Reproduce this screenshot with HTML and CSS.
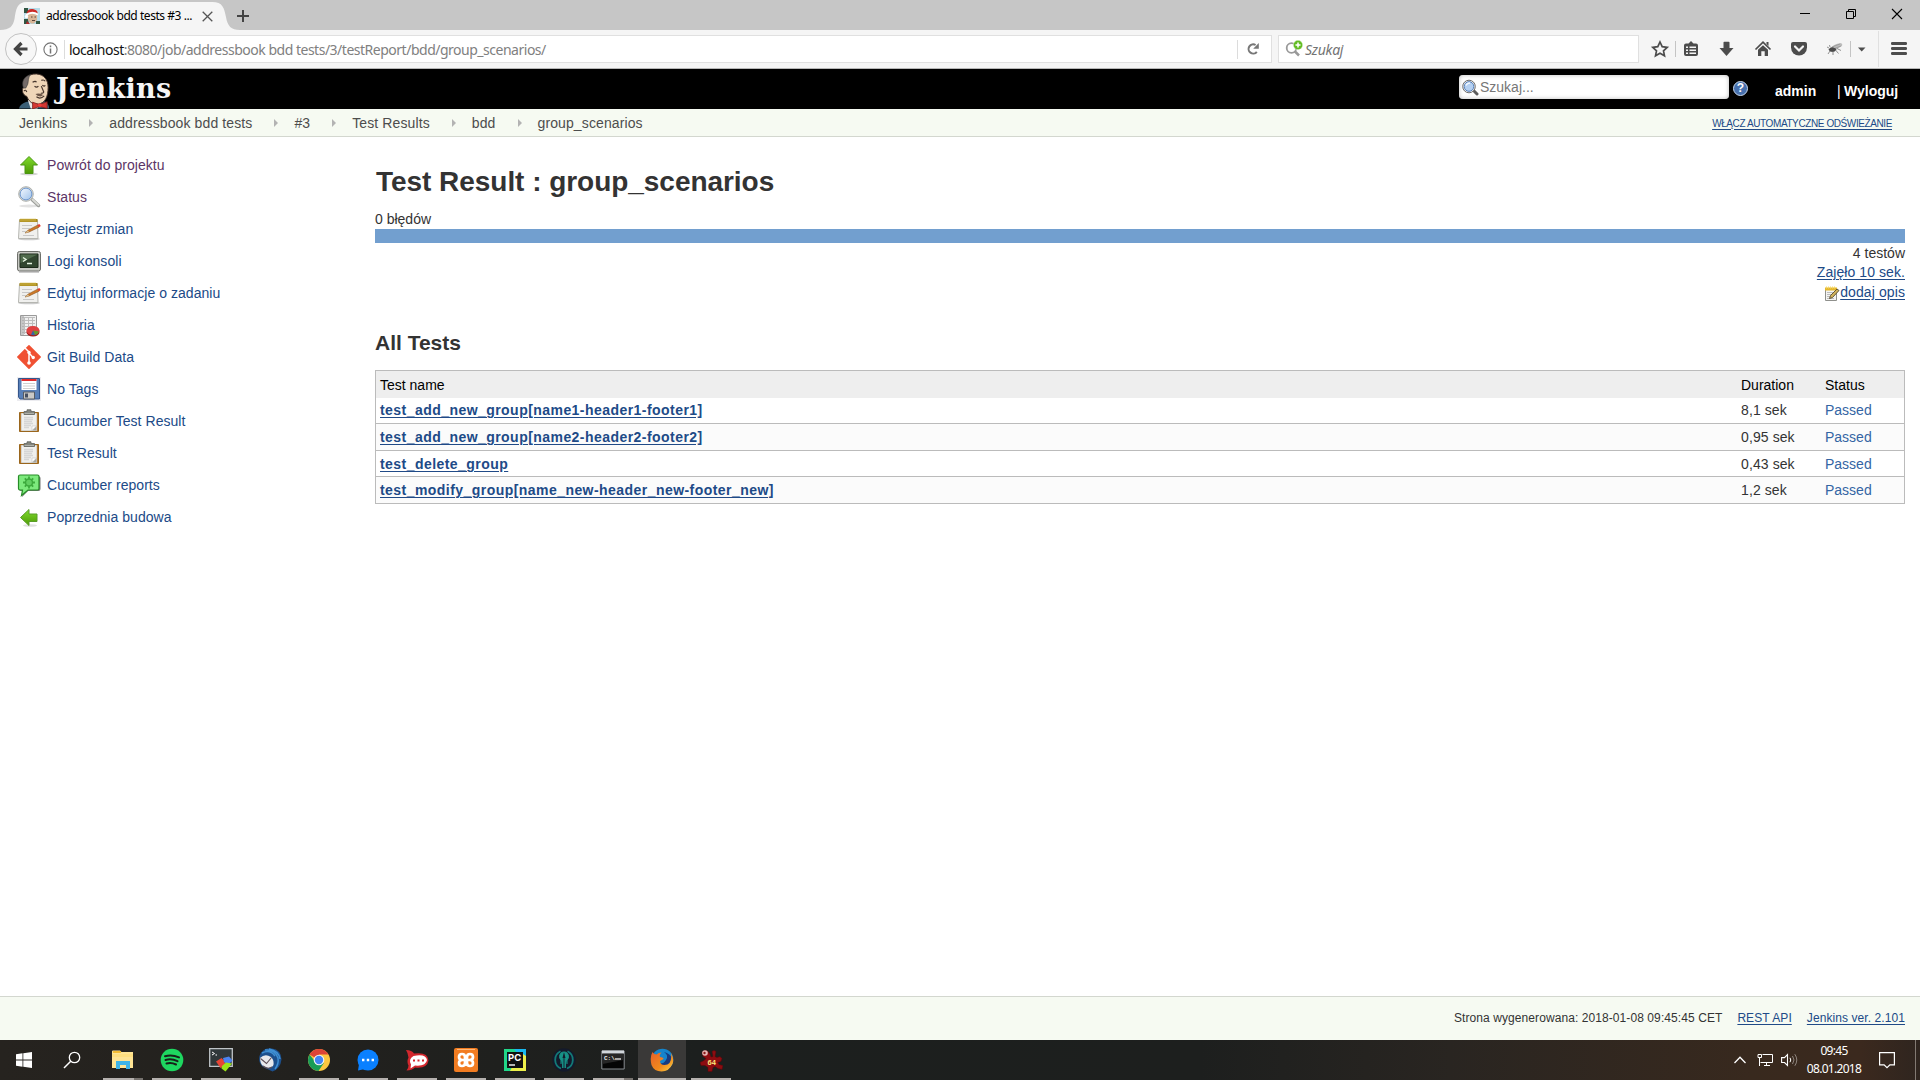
FILE: index.html
```html
<!DOCTYPE html>
<html lang="pl">
<head>
<meta charset="utf-8">
<title>addressbook bdd tests #3 - Jenkins</title>
<link rel="stylesheet" href="styles.css">
</head>
<body>
<svg width="0" height="0" class="defs">
  <defs>
    <linearGradient id="gr" x2="0" y2="1"><stop stop-color="#7fdc2c"/><stop offset="1" stop-color="#4e9a06"/></linearGradient>
    <linearGradient id="lens" x2="1" y2="1"><stop stop-color="#f4f9ff"/><stop offset="1" stop-color="#9fc2ea"/></linearGradient>
    <linearGradient id="fox" x1="0" y1="0" x2="1" y2="1"><stop stop-color="#e6602a"/><stop offset=".6" stop-color="#f08a1c"/><stop offset="1" stop-color="#fbd54a"/></linearGradient>
    <symbol id="notepad" viewBox="0 0 24 24">
      <ellipse cx="12" cy="22" rx="11" ry="1.300" fill="#ccc"/>
      <path d="M2.500 3h18l.5 18.500H1.500z" fill="#f0f0ee" stroke="#b5b6b1"/>
      <path d="M2.500 2h18v3h-18z" fill="#a88a1c"/><path d="M4 1.500v3M6 1.500v3M8 1.500v3M10 1.500v3M12 1.500v3M14 1.500v3M16 1.500v3M18 1.500v3" stroke="#d3b94a"/>
      <path d="M5 8.500h10M5 11.500h8M5 14.500h5M6 18.500h11" stroke="#c8c8c8"/>
      <path d="M8 16l3-2.800L20.500 8.200l1.500 2L12 15z" fill="#cf7a29" stroke="#895018" stroke-width=".6"/><path d="M20.300 8l2-1 1.500 2-1.800 1.200z" fill="#e33b2d"/><path d="M8 16l3-2.800 1 1.800z" fill="#d9c59c"/>
    </symbol>
    <symbol id="clipboard" viewBox="0 0 24 24">
      <path d="M2.500 3.500h19v19h-19z" fill="#b97c30" stroke="#9a661d"/>
      <path d="M4.500 4.500h15v17h-15z" fill="#f0f0ee" stroke="#d7d7d3"/>
      <path d="M7 8.500h9M7 10.500h9M7 12.500h8M7 14.500h9M7 16.500h7M7 18.500h5" stroke="#d6d6d6" stroke-width="1.500"/>
      <path d="M15 21.500l4.500-4.500v4.500z" fill="#a6a6a0"/><path d="M15 21.500v-4.500h4.500z" fill="#fff" stroke="#bbb" stroke-width=".5"/>
      <path d="M7 5.500v-3h3V.8h4v1.700h3.500v3z" fill="#858780" stroke="#60625d" stroke-width=".8"/><path d="M7.500 4.500h9.500" stroke="#aeb0aa"/>
    </symbol>
    <symbol id="lensicon" viewBox="0 0 24 24">
      <ellipse cx="12" cy="21" rx="10" ry="1.500" fill="#e2e2e2"/>
      <path d="M15 14.500l6.500 6" stroke="#9c9e9a" stroke-width="3.500" stroke-linecap="round"/><path d="M15.500 14.500l6 5.500" stroke="#d9dad6" stroke-width="1.800" stroke-linecap="round"/>
      <circle cx="9" cy="9" r="7.300" fill="#d8dad5" stroke="#b0b2ae"/><circle cx="9" cy="9" r="5.900" fill="url(#lens)" stroke="#6d97cf"/>
    </symbol>
  </defs>
</svg>

<div class="tabstrip">
  <div class="tab">
    <svg class="tab-shape" width="240" height="28" viewBox="0 0 240 28"><path d="M0 28C10 28 13 24 14.500 17C16 7 17 0 27 0H212C223 0 224 6 226 15C227.500 24 231 28 240 28z" fill="#f5f5f5"/></svg>
    <svg width="16" height="16" viewBox="0 0 16 16"><path d="M0 0h16v16H0z" fill="#b6dbe8"/><path d="M0 0h4v5H0zM0 11h4l1 5H0zM12 13h4v3h-4z" fill="#315542"/><path d="M3.500 7C4 3 7 2 11 3l2 4v5l-3 3.500H7L4 12z" fill="#d9b596"/><path d="M2.500 6C3 1 8-.5 13 3l1 3C10 3.800 6 4 2.500 6z" fill="#cc2b27"/><path d="M2 7C6 4 10 4 14 6.500" stroke="#fff" stroke-width="2" fill="none"/><circle cx="2.500" cy="8.500" r="1.700" fill="#fff"/><path d="M7 9h1.500M10.500 9H12M8 12.500h3" stroke="#594239"/><path d="M3 13l3 3H2z" fill="#b4282d"/></svg>
    <span class="tab-title">addressbook bdd tests #3 ...</span>
    <svg class="tab-close" width="11" height="11" viewBox="0 0 11 11"><path d="M.7.700l9.600 9.600M10.300.7L.7 10.300" stroke="#555" stroke-width="1.300"/></svg>
  </div>
  <svg class="newtab" width="12" height="12" viewBox="0 0 12 12"><path d="M6 0v12M0 6h12" stroke="#444" stroke-width="2"/></svg>
  <div class="winctl">
    <svg width="46" height="28" viewBox="0 0 46 28"><path d="M18 13.500h10" stroke="#000"/></svg>
    <svg width="46" height="28" viewBox="0 0 46 28"><path d="M18.500 11.500h7v7h-7zM20.500 11.500v-2h7v7h-2" fill="none" stroke="#000"/></svg>
    <svg width="46" height="28" viewBox="0 0 46 28"><path d="M18 9l10 10M28 9L18 19" stroke="#000" stroke-width="1.100"/></svg>
  </div>
</div>

<div class="toolbar">
  <div class="back"><svg width="16" height="16" viewBox="0 0 16 16"><path d="M14.500 8H4M8.500 2L2.500 8l6 6" fill="none" stroke="#444" stroke-width="3.200"/></svg></div>
  <div class="urlbar">
    <svg class="info" width="15" height="15" viewBox="0 0 15 15"><circle cx="7.500" cy="7.500" r="6.600" fill="none" stroke="#737373" stroke-width="1.100"/><path d="M7.500 6.500v5M7.500 3.500v1.700" stroke="#737373" stroke-width="1.500"/></svg>
    <span class="vline"></span>
    <span class="url"><b>localhost</b>:8080/job/addressbook bdd tests/3/testReport/bdd/group_scenarios/</span>
    <span class="vline"></span>
    <svg class="reload" width="12" height="12" viewBox="0 0 12 12"><path d="M9.800 8.800A4.600 4.600 0 1 1 8.600 2" fill="none" stroke="#777" stroke-width="2"/><path d="M11.800 0v5.700H6.200z" fill="#777"/></svg>
  </div>
  <div class="searchbar">
    <svg width="18" height="18" viewBox="0 0 18 18"><circle cx="6.500" cy="8" r="4.800" fill="none" stroke="#999" stroke-width="1.800"/><path d="M9.500 11l4.500 4.500" stroke="#999" stroke-width="2.500"/><circle cx="13" cy="5" r="4.700" fill="#62bc22" stroke="#fff" stroke-width=".4"/><path d="M13 2.500v5M10.500 5h5" stroke="#fff" stroke-width="1.500"/></svg>
    <i>Szukaj</i>
  </div>
  <div class="tools">
    <svg width="30" height="20" viewBox="0 0 30 20"><path d="M15 3l2.200 4.700 5 .6-3.700 3.500 1 5L15 14.300l-4.500 2.500 1-5L7.800 8.300l5-.6z" fill="none" stroke="#4c4c4c" stroke-width="1.700"/></svg>
    <span class="vline"></span>
    <svg width="30" height="20" viewBox="0 0 30 20"><path d="M10 4.500h2.500L15 2l2.500 2.500H20q2 0 2 2V15q0 2-2 2H10q-2 0-2-2V6.500q0-2 2-2z" fill="#4c4c4c"/><path d="M10 8.200h2M13.500 8.200h6.500M10 11.200h2M13.500 11.200h6.500M10 14.200h2M13.500 14.200h6.500" stroke="#f5f5f5" stroke-width="1.600"/></svg>
    <svg width="36" height="20" viewBox="0 0 36 20"><path d="M15 3.500q0-.8.800-.8h4.400q.8 0 .8.800V9h4L18 17 11 9h4z" transform="translate(-.5)" fill="#4c4c4c"/></svg>
    <svg width="36" height="20" viewBox="0 0 36 20"><path d="M10.500 10.500L18 3.200l7.500 7.300" fill="none" stroke="#4c4c4c" stroke-width="1.700"/><path d="M21.500 3h2v4l-2-2zM13 10.800l5-4.600 5 4.600V17h-3.300v-4.800h-3.400V17H13z" fill="#4c4c4c"/></svg>
    <svg width="36" height="20" viewBox="0 0 36 20"><path d="M12 3h12q2 0 2 2v3.500a8 8 0 0 1-16 0V5q0-2 2-2z" fill="#4c4c4c"/><path d="M14 7.500l4 4 4-4" fill="none" stroke="#f5f5f5" stroke-width="2.200" stroke-linecap="round"/></svg>
    <svg width="36" height="20" viewBox="0 0 36 20"><path d="M13 10q3-5 11-6 2 1 1 3-4 3-9 4z" fill="#bdbdbd"/><path d="M15 8l8-3M16 10l8-3" stroke="#888" stroke-width=".6"/><path d="M11.500 10.500q2-3 5-2l3 1.500q-1 3-4 3-3 0-4-2.500z" fill="#4a4a4a"/><path d="M12 9l-2-1M13 8l-.5-2M13 12l-2 3M16 12v4M18.500 11l3 3.500M20 9.500l4 2" fill="none" stroke="#777" stroke-width=".8"/></svg>
  </div>
  <span class="vline"></span>
  <svg class="caret" width="8" height="5" viewBox="0 0 8 5"><path d="M0 .5h7.500L3.700 4.500z" fill="#4c4c4c"/></svg>
  <span class="vline long"></span>
  <svg class="menu" width="16" height="14" viewBox="0 0 16 14"><path d="M1.300 1.500h13.400M1.300 6.500h13.400M1.300 11.500h13.400" stroke="#4c4c4c" stroke-width="2.800" stroke-linecap="round"/></svg>
</div>

<header class="jheader">
  <svg class="butler" width="34" height="36" viewBox="0 0 34 36"><path d="M0 36q1-5 8-7l17-1q6 2 6 8z" fill="#3b5f76"/><path d="M9 27l13 2-3 7h-7z" fill="#e9e9e9"/><path d="M5 14C4 6 9 0 18 .5c8 .5 12 6 12 14 0 9-3 16-10 17-6 1-10-3-12-8-4-1-6-7-3-9.500z" fill="#efd6b8" stroke="#46352c"/><path d="M4.500 15C2 7 6 3 12 1 9 4 10 8 9 11l-2 4z" fill="#746b68" stroke="#333" stroke-width=".6"/><path d="M5 18q2-2 3 1M14 9q3-2 4 0M23 7q3-1 4 1M16 13q2 2 4 0M24 12q2 2 3 0M23 13l2.500 6q-1 2-3 1M18 24q4 3 8-1" fill="none" stroke="#46352c" stroke-width="1.200"/><path d="M17 21q4-1 8 1l-2 1.500q-4 .5-6-2.500z" fill="#6e5748"/><path d="M14 29.500l7 2.500 8-3v7l-8-2-7 2.500z" fill="#d33833" stroke="#7c1b18" stroke-width=".8"/><circle cx="21.500" cy="32.500" r="2" fill="#ef3d3a"/></svg>
  <span class="logo">Jenkins</span>
  <div class="jsearch"><svg width="17" height="17" viewBox="0 0 17 17"><path d="M11 11l4 4" stroke="#5c5c5c" stroke-width="3" stroke-linecap="round"/><circle cx="7" cy="7.500" r="6.300" fill="#eee" stroke="#6f6f6f"/><circle cx="7" cy="7.500" r="4.800" fill="#b4d0f2" stroke="#5580bc"/><path d="M4 6.500q1-2.500 4-2.500" stroke="#f0f7ff" fill="none" stroke-width="1.500"/></svg><span>Szukaj...</span></div>
  <div class="help">?</div>
  <b class="admin">admin</b>
  <span class="bar">|</span><b class="logout">Wyloguj</b>
</header>

<nav class="crumbs">
  <span>Jenkins</span><i></i><span>addressbook bdd tests</span><i></i><span>#3</span><i></i><span>Test Results</span><i></i><span>bdd</span><i></i><span>group_scenarios</span>
  <a class="autorefresh">WŁĄCZ AUTOMATYCZNE ODŚWIEŻANIE</a>
</nav>

<div class="page">
  <aside class="side">
    <a class="visited"><svg width="24" height="24" viewBox="0 0 24 24"><ellipse cx="12" cy="21" rx="9" ry="1.500" fill="#d5d5d5"/><path d="M12 3.500l8.500 8.500H16v8.500H8V12H3.500z" fill="url(#gr)" stroke="#4b9613"/></svg>Powrót do projektu</a>
    <a class="visited"><svg width="24" height="24"><use href="#lensicon"/></svg>Status</a>
    <a><svg width="24" height="24"><use href="#notepad"/></svg>Rejestr zmian</a>
    <a><svg width="24" height="24" viewBox="0 0 24 24"><rect x=".5" y="2.500" width="23" height="19.500" rx="2" fill="#c8c9c4" stroke="#6d6f6a"/><path d="M3 5h18v13.500H3z" fill="#31452f" stroke="#1c2a1a"/><path d="M3.500 5.500h17L3.500 14z" fill="#506b4c"/><path d="M6 8.500l3 2-3 2M10 14.500h5" fill="none" stroke="#e8f6e3" stroke-width="1.400"/><path d="M2 23h20" stroke="#999"/></svg>Logi konsoli</a>
    <a><svg width="24" height="24"><use href="#notepad"/></svg>Edytuj informacje o zadaniu</a>
    <a><svg width="24" height="24" viewBox="0 0 24 24"><path d="M3.500 2.500h16v20h-16z" fill="#f0f0f0" stroke="#9a9a9a"/><path d="M5 4.500h13M5 7.500h13M5 10.500h13M5 13.500h13M5 16.500h8M5 19.500h6M7.500 4v17M11.500 4v17M15.500 4v12" stroke="#bdbdbd"/><path d="M4 3h3v19H4z" fill="#aaa" opacity=".6"/><ellipse cx="16" cy="19" rx="6.500" ry="4.500" fill="#a01c1c"/><ellipse cx="16" cy="17.500" rx="6.500" ry="4.500" fill="#e04141"/><path d="M16 17.500l6 1q-1 3-4 3.500z" fill="#639c2c"/><path d="M16 17.500l2 4.500q-2 .5-4-.2z" fill="#3465a4"/></svg>Historia</a>
    <a><svg width="24" height="24" viewBox="0 0 24 24"><path d="M12 .8L23.200 12 12 23.200.8 12z" fill="#f05133" stroke="#f05133" stroke-width="1.500" stroke-linejoin="round"/><path d="M8 3l4 4v11M12 8l4 4.500" fill="none" stroke="#fff" stroke-width="1.500"/><circle cx="12" cy="7.500" r="1.700" fill="#fff"/><circle cx="12" cy="18" r="1.800" fill="#fff"/><circle cx="16.200" cy="12.500" r="1.700" fill="#fff"/></svg>Git Build Data</a>
    <a><svg width="24" height="24" viewBox="0 0 24 24"><path d="M0 0h24v24H0z" fill="#ececf0"/><path d="M1.500 1.500h21v20.500H3l-1.500-2z" fill="#5880b8" stroke="#34568c"/><path d="M4.500 2h15v11h-15z" fill="#fff"/><path d="M4.500 2h15v2h-15z" fill="#e12b2b"/><path d="M6 6.500h12M6 9h12M6 11.500h12" stroke="#d0d0d0"/><path d="M6.500 15h11v7h-11z" fill="#c9c9c6" stroke="#565c64"/><path d="M8 16.500h3v4H8z" fill="#444f61"/></svg>No Tags</a>
    <a><svg width="24" height="24"><use href="#clipboard"/></svg>Cucumber Test Result</a>
    <a><svg width="24" height="24"><use href="#clipboard"/></svg>Test Result</a>
    <a><svg width="24" height="24" viewBox="0 0 24 24"><path d="M4 3.500h18q1.500 0 1.500 1.500v11q0 2-2 2H11l-6 6 1-6H4q-2 0-2-2V5z" fill="#777"/><path d="M3 2h17.500q1.500 0 1.500 1.500v12q0 1.500-1.500 1.500h-9.500L4.500 22.500l1-5.500H3q-1.500 0-1.500-1.500v-12Q1.500 2 3 2z" fill="#7dea7d" stroke="#278c27" stroke-width="1.200"/><path d="M12 3.500v12M6 9.500h12M7.800 5.300l8.400 8.400M16.200 5.300l-8.400 8.400" stroke="#3daa3d" stroke-width="1.800"/><circle cx="12" cy="9.500" r="3.500" fill="#62cf62" stroke="#3daa3d" stroke-width="1.500"/></svg>Cucumber reports</a>
    <a><svg width="24" height="24" viewBox="0 0 24 24"><ellipse cx="13" cy="20.500" rx="7" ry="1.300" fill="#e0e0e0"/><path d="M3.500 12.500l8.500-8V9h8v7.500h-8v4z" fill="url(#gr)" stroke="#5b9d28"/></svg>Poprzednia budowa</a>
  </aside>

  <main class="main">
    <h1>Test Result : group_scenarios</h1>
    <div class="fails">0 błędów</div>
    <div class="progress"></div>
    <div class="total">4 testów</div>
    <div class="took"><a>Zajęło 10 sek.</a></div>
    <div class="desc"><svg width="16" height="16" viewBox="0 0 16 16"><path d="M1.500 2.500h11v12h-11z" fill="#f4f4f2" stroke="#8f908c"/><path d="M1 1.500h12v3H1z" fill="#e5b82e"/><path d="M2.500.5v2M4.500.5v2M6.500.5v2M8.500.5v2M10.500.5v2" stroke="#f6d968"/><path d="M3 6.500h6M3 8.500h4M3 10.500h3M3 12.500h7" stroke="#bbb"/><path d="M5.500 12.500l1-3L13 3l2 1.500-6.500 7z" fill="#d0b25c" stroke="#55492c" stroke-width=".9"/></svg><a>dodaj opis</a></div>
    <h2>All Tests</h2>
    <div class="results">
      <div class="row head"><span>Test name</span><span>Duration</span><span>Status</span></div>
      <div class="row"><a>test_add_new_group[name1-header1-footer1]</a><span>8,1 sek</span><em>Passed</em></div>
      <div class="row alt"><a>test_add_new_group[name2-header2-footer2]</a><span>0,95 sek</span><em>Passed</em></div>
      <div class="row low"><a>test_delete_group</a><span>0,43 sek</span><em>Passed</em></div>
      <div class="row alt"><a>test_modify_group[name_new-header_new-footer_new]</a><span>1,2 sek</span><em>Passed</em></div>
    </div>
  </main>
</div>

<footer class="foot"><span>Strona wygenerowana: 2018-01-08 09:45:45 CET</span><a>REST API</a><a>Jenkins ver. 2.101</a></footer>

<div class="taskbar">
  <div class="start"><svg width="16" height="16" viewBox="0 0 16 16"><path d="M0 2.300L6.500 1.300V7.600H0zM7.300 1.200L16 0v7.600H7.300zM0 8.400h6.500v6.300L0 13.700zM7.300 8.400H16V16l-8.700-1.200z" fill="#fff"/></svg></div>
  <div class="start"><svg width="18" height="18" viewBox="0 0 18 18"><circle cx="11.500" cy="6.500" r="5.200" fill="none" stroke="#fff" stroke-width="1.300"/><path d="M7.700 10.300L1 17" stroke="#fff" stroke-width="1.500"/></svg></div>
  <div class="apps">
    <div class="app run multi"><svg width="24" height="24" viewBox="0 0 24 24"><path d="M1 3.500q0-1 1-1h7l1.500 1.500H22V20H1z" fill="#ffe494"/><path d="M2 3h8v2H2z" fill="#f5bd35"/><path d="M1 6h21v3H1z" fill="#ffdf80"/><path d="M5 13h14v8h-4v-4H9v4H5z" fill="#3eb4e8"/></svg></div>
    <div class="app run"><svg width="24" height="24" viewBox="0 0 24 24"><circle cx="12" cy="12" r="11.300" fill="#1ed760"/><path d="M5 8.200q7-2 14 1.200M5.500 12q6-1.700 12 1.200M6.500 15.500q5-1.300 9.500 1" fill="none" stroke="#172019" stroke-width="2" stroke-linecap="round"/></svg></div>
    <div class="app run"><svg width="24" height="24" viewBox="0 0 24 24"><path d="M.7.700h22.600v17.600H.7z" fill="#30383a" stroke="#bfc4c7" stroke-width="1.300"/><path d="M3 4l2.500 1.500L3 7M6.500 7H8" fill="none" stroke="#fff"/><path d="M7 13.500l5.500-3.500 3 3 1 5-5 2z" fill="#e64636"/><path d="M14 10l6-1.500 3.500 4-4.500 4.500-4-3z" fill="#4b83f0"/><path d="M13 18l4-3.500 6 1-6.500 8-4-3z" fill="#9ae51a"/></svg></div>
    <div class="app"><svg width="24" height="24" viewBox="0 0 24 24"><path d="M1.500 8Q5-1 14 .5q9 1 9.500 11-1 9-9 12L5 19q-5-4-3.500-11z" fill="#1c4f8c"/><path d="M7 2q10-1 13 8 1 6-3 11M11 1q10 2 11 10M4 5q8-4 13 3" fill="none" stroke="#3f8fd2" stroke-width="1.500"/><path d="M2 10Q7 5 13 9q4 4 2 9-5 4-10 0-3-3-3-8z" fill="#e8e9ec"/><path d="M2.500 10.500l6 5 5-6M5 18q5 4 9 1" fill="none" stroke="#5d4f58" stroke-width="1.100"/></svg></div>
    <div class="app run"><svg width="24" height="24" viewBox="0 0 24 24"><circle cx="12" cy="12" r="11" fill="#fbc740"/><path d="M12 12L2.500 6.500A11 11 0 0 1 21.500 6.500H12z" fill="#dc4437"/><path d="M2.500 6.500A11 11 0 0 0 11.500 23L17 14.700H9z" fill="#189c58"/><circle cx="12" cy="12" r="5.300" fill="#f4f4f4"/><circle cx="12" cy="12" r="4.200" fill="#4285f4"/></svg></div>
    <div class="app run"><svg width="24" height="24" viewBox="0 0 24 24"><circle cx="12" cy="12" r="10.500" fill="#0a80ff"/><path d="M3 16l-1 6.500L9 21z" fill="#0a80ff"/><path d="M6 12h2.400M10.800 12h2.400M15.600 12H18" stroke="#fff" stroke-width="2.400"/></svg></div>
    <div class="app run"><svg width="24" height="24" viewBox="0 0 24 24"><path d="M1 2q6 0 8 3.500 14-2 14.500 7Q22 21 10 19.500q-3 3-8.500 3 2-2 2-5-2-4 0-8Q3 5 1 2z" fill="#d3272d"/><path d="M8.500 8Q21 5.500 22 12q-1 6.500-12 5.500l-4.500 3 .5-4Q3 11 8.500 8z" fill="#fff"/><path d="M8 12.500h2M12.500 12.500h2M17 12.500h2" stroke="#d3272d" stroke-width="2.200"/></svg></div>
    <div class="app run"><svg width="24" height="24" viewBox="0 0 24 24"><rect width="24" height="24" rx="2" fill="#f27c21"/><path d="M3 1.500h18" stroke="#ffb878"/><path d="M12 12H8.500Q5 12 5 9t3-3q3 0 3 3v6q0 3-3 3t-3-3 3.500-3h7q3.500 0 3.500-3t-3-3-3 3v6q0 3 3 3t3-3-3.500-3z" fill="none" stroke="#fff" stroke-width="2.700"/></svg></div>
    <div class="app run"><svg width="24" height="24" viewBox="0 0 24 24"><path d="M1 1h22v22H1z" fill="#21d789"/><path d="M11 1h12v16z" fill="#19b9f0"/><path d="M17 4l6 4v15H7z" fill="#edf04a"/><path d="M4 4h16v16H4z" fill="#111"/><text x="5" y="12.500" font-family="Inter, sans-serif" font-size="9.500" font-weight="700" fill="#fff">PC</text><path d="M6 17h6" stroke="#fff" stroke-width="1.400"/></svg></div>
    <div class="app run"><svg width="24" height="24" viewBox="0 0 24 24"><circle cx="12" cy="12" r="11.700" fill="#141a2b"/><path d="M8.500 3.200A9.500 9.500 0 0 0 9 20.500M15.500 3.200A9.500 9.500 0 0 1 15 20.500" fill="none" stroke="#127a78" stroke-width="1.800"/><path d="M12 4q4 0 4.500 4.500 0 2-1.500 3.500v4M12 4Q8 4 7.500 8.500q0 2 1.500 3.500v4" fill="#179287" stroke="#179287"/><path d="M10.800 10v10M13.200 10v10" stroke="#179287" stroke-width="1.500"/></svg></div>
    <div class="app run multi"><svg width="24" height="24" viewBox="0 0 24 24"><path d="M.8 3h22.400v18H.8z" fill="#050505" stroke="#888d91"/><path d="M1 2.500h22v3H1z" fill="#d2d7dc"/><path d="M1.500 6h21v6l-21 4z" fill="#262626"/><text x="3" y="11.500" font-family="Liberation Mono, monospace" font-size="6" font-weight="700" fill="#eee">C:\</text><path d="M14 11h6" stroke="#eee" stroke-width="1.300"/></svg></div>
    <div class="app run active"><svg width="24" height="24" viewBox="0 0 24 24"><circle cx="12.500" cy="11.500" r="10.800" fill="#1684cb"/><path d="M14 4q5 3 2 8t-8 3l2 5h10l3-8Q20 5 14 4z" fill="#173b80"/><path d="M2.500 4q1.500 2.500 4 2.500 2-2 5-2-2.500 2.500-1.500 4.500 3.500.5 3.500 2l-3.500 2q0 4 4.500 4 8 0 6.500-12 3.500 6 1.500 11-3.500 7.500-11 7.500T1.500 17Q-.5 9 2.500 4z" fill="url(#fox)"/></svg></div>
    <div class="app run"><svg width="24" height="24" viewBox="0 0 24 24"><path d="M3 4q5-4 8 2l1 3 2-.500-1-5q2-2 4 0l-1 5 2 1 3-1 2 2-1 3-3 1 1 2 4 1-1 4-4-1-3-2-2 1-1 4-4 0 0-4-3-2-4 0-1-3 4-2 2-2-3-2z" fill="#8d0c11" stroke="#590709" stroke-width=".5"/><circle cx="6" cy="5" r="2.800" fill="#e6b6b4"/><circle cx="5.500" cy="5" r="1.200" fill="#8b1717"/><text x="8.500" y="16.500" font-family="Liberation Sans, sans-serif" font-size="7.500" font-weight="700" fill="#ffe67a">64</text></svg></div>
  </div>
  <div class="tray">
    <svg width="12" height="8" viewBox="0 0 12 8"><path d="M.5 7L6 1.200 11.500 7" fill="none" stroke="#fff" stroke-width="1.300"/></svg>
    <svg class="net" width="17" height="14" viewBox="0 0 17 14"><path d="M5.500 1.500h10v8h-12M1 1.500h3.500v3H1zM2.500 5v8M7 12.500h6M9.500 10v2.500" fill="none" stroke="#fff"/></svg>
    <svg class="vol" width="17" height="14" viewBox="0 0 17 14"><path d="M.6 4.600h2.900L6.500 1.500v11L3.500 9.500H.6z" fill="none" stroke="#fff" stroke-width="1.100"/><path d="M9 4.800q1.500 2.200 0 4.400" fill="none" stroke="#fff"/><path d="M11.500 3q3 4 0 8M13.800 1.200q4 5.800 0 11.600" fill="none" stroke="#8f857e"/></svg>
    <div class="clock">09:45<br>08.01.2018</div>
    <svg class="note" width="16" height="17" viewBox="0 0 16 17"><path d="M.6.600h14.800v12.300h-4.500L8 15.700l-2.900-2.800H.6z" fill="none" stroke="#fff" stroke-width="1.200"/></svg>
    <span class="peek"></span>
  </div>
</div>
</body>
</html>
```

FILE: styles.css
```css
* { box-sizing: border-box; }
body { margin: 0; width: 1920px; height: 1080px; overflow: hidden; display: flex; flex-direction: column; background: #fff; color: #333; font: 14px/20px "Liberation Sans", Arial, sans-serif; }
svg { display: block; flex: none; }
.defs { position: absolute; }

.tabstrip { height: 30px; flex: none; background: #c6c6c6; display: flex; align-items: flex-start; font: 12px/16px "Noto Sans", "Open Sans", sans-serif; color: #000; }
.tab { position: relative; width: 237px; height: 30px; padding: 2px 0 0 24px; display: flex; align-items: center; }
.tab > * { position: relative; }
.tab .tab-shape { position: absolute; left: 0; top: 2px; }
.tab-title { margin-left: 6px; width: 156px; white-space: nowrap; font-size: 12px; letter-spacing: -.45px; }
.newtab { margin-top: 10px; }
.winctl { margin-left: auto; display: flex; }

.toolbar { height: 39px; flex: none; background: #f5f5f5; border-bottom: 1px solid #b6b6b6; padding-left: 5px; display: flex; align-items: center; font: 14px/20px "Noto Sans", "Open Sans", sans-serif; color: #737373; }
.back { position: relative; z-index: 1; width: 32px; height: 32px; border: 1px solid #c2c2c2; border-radius: 50%; background: #f7f7f7; display: flex; align-items: center; justify-content: center; flex: none; }
.urlbar { width: 1247px; height: 28px; margin-left: -12px; padding-left: 17px; border: 1px solid #e0e0e0; background: #fff; display: flex; align-items: center; flex: none; }
.vline { width: 1px; height: 16px; background: #c4c4c4; flex: none; }
.urlbar .vline { height: 19px; background: #dcdcdc; }
.info { margin-right: 6px; }
.url { margin-left: 4px; width: 1168px; white-space: nowrap; letter-spacing: -.49px; padding-top: 2px; color: #808080; }
.url b { font-weight: 400; color: #111; }
.reload { margin-left: 9px; }
.searchbar { width: 361px; height: 28px; margin-left: 6px; padding-left: 6px; border: 1px solid #e0e0e0; background: #fff; display: flex; align-items: center; flex: none; }
.searchbar i { margin-left: 2px; letter-spacing: -.3px; padding-top: 2px; }
.tools { margin-left: 6px; display: flex; align-items: center; }
.tools svg:nth-of-type(2) { margin-right: 3px; }
.tools svg:last-child { margin-right: -3px; }
.caret { margin: 0 12px 0 7px; }
.vline.long { height: 36px; background: #e0e0e0; }
.menu { margin-left: 12px; }

.jheader { height: 40px; flex: none; background: #000; color: #fff; display: flex; align-items: center; padding-left: 19px; overflow: hidden; }
.butler { align-self: flex-end; width: 33px; }
.logo { margin-left: 4px; width: 120px; font: 700 27px/36px "DejaVu Serif", serif; letter-spacing: .3px; color: #f5f5f5; }
.jsearch { margin-left: 1283px; width: 270px; height: 24px; margin-bottom: 4px; border-radius: 4px; background: #fff; box-shadow: inset 0 0 4px #bbb; padding-left: 3px; display: flex; align-items: center; gap: 1px; color: #777; flex: none; }
.help { margin: 0 0 2px 4px; width: 15px; height: 15px; border-radius: 50%; border: 1px solid #c8d8ed; background: #4770ae; font: 700 12px/13px "Liberation Sans", sans-serif; text-align: center; }
.admin { margin: 4px 0 0 27px; width: 62px; }
.bar { margin-top: 4px; width: 7px; }
.logout { margin-top: 4px; }

.crumbs { height: 28px; flex: none; background: #f6faf2; border-bottom: 1px solid #d3d7cf; padding: 1px 28px 0 19px; display: flex; align-items: center; color: #4d4d4d; letter-spacing: .11px; }
.crumbs i { margin: 0 16px 0 22px; border-left: 4px solid #b3b3b3; border-top: 4px solid transparent; border-bottom: 4px solid transparent; }
.autorefresh { margin: 1px 0 0 auto; font-size: 10px; letter-spacing: -.4px; }
a { color: #204a87; text-decoration: underline; text-underline-offset: 2px; }

.page { flex: 1; display: flex; min-height: 0; }
.side { width: 375px; padding: 12px 0 0 17px; letter-spacing: .05px; }
.side a { height: 32px; display: flex; align-items: center; gap: 6px; text-decoration: none; }
.side a.visited { color: #5c3566; }
.main { width: 1530px; }
h1 { margin: 28px 0 0 1px; font-size: 28px; line-height: 34px; letter-spacing: -.04px; }
.fails { margin-top: 10px; height: 20px; }
.progress { height: 14px; background: #729fcf; }
.total, .took, .desc { height: 20px; text-align: right; }
.took { margin-top: -1px; letter-spacing: .07px; }
.desc { display: flex; justify-content: flex-end; align-items: center; letter-spacing: .1px; }
.desc svg { margin-top: 3px; }
h2 { margin: 29px 0 15px; font-size: 21px; line-height: 24px; }
.results { border: 1px solid #bbb; border-bottom: 0; }
.row { display: grid; grid-template-columns: 1361px 84px 1fr; padding-left: 4px; height: 26px; border-bottom: 1px solid #bbb; line-height: 25px; }
.row.alt { height: 27px; line-height: 26px; background: #fbfbfb; }
.row.low { line-height: 27px; }
.row.head { height: 27px; line-height: 28px; border: 0; background: #eee; color: #000; }
.row span { letter-spacing: .1px; }
.row.head span { letter-spacing: 0; }
.row a { font-weight: 700; letter-spacing: .45px; }
.row em { font-style: normal; color: #3465a4; }

.foot { height: 44px; flex: none; border-top: 1px solid #d3d7cf; background: #f6faf2; padding: 0 15px 2px 0; display: flex; justify-content: flex-end; align-items: center; gap: 15px; font-size: 12px; letter-spacing: .08px; }

.taskbar { height: 40px; flex: none; display: flex; background: linear-gradient(90deg, #26231f 0, #22211e 300px, #1c1f1e 700px, #1d1f1e 1200px, #292521 1450px, #38291e 1750px, #3b291e 1860px, #2f251f); }
.start { width: 48px; display: flex; align-items: center; justify-content: center; }
.apps { margin-left: 3px; display: flex; gap: 1px; }
.app { width: 48px; height: 40px; display: flex; align-items: center; justify-content: center; background: linear-gradient(#b5b1ae, #b5b1ae) center bottom / 0 2px no-repeat; }
.app.run { background-size: 40px 2px; }
.app.multi { background-image: linear-gradient(90deg, #b5b1ae 31px, #77736f 31px); }
.app.active { background-size: 48px 2px; background-color: #3a3938; }
.tray { margin-left: auto; display: flex; align-items: center; color: #fff; }
.net { margin-left: 11px; }
.vol { margin-left: 7px; }
.clock { margin-left: 8px; width: 56px; text-align: center; font: 12px/18px "Noto Sans", "Open Sans", sans-serif; letter-spacing: -.7px; white-space: nowrap; }
.note { margin-left: 17px; }
.peek { margin: 0 4px 0 20px; width: 1px; height: 40px; background: #827972; }
```
